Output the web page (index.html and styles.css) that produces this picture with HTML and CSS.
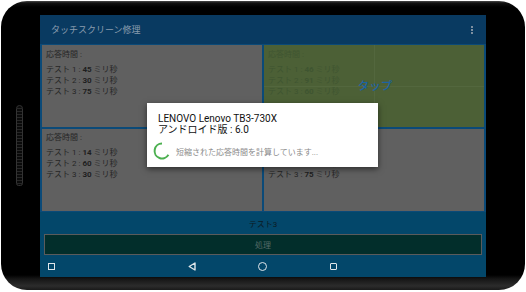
FILE: index.html
```html
<!DOCTYPE html>
<html lang="ja">
<head>
<meta charset="utf-8">
<title>タッチスクリーン修理</title>
<link rel="stylesheet" href="styles.css">
</head>
<body>
<div class="device">
  <div class="side-btn"></div>
  <div class="screen">
    <header class="appbar">
      <span class="title">タッチスクリーン修理</span>
      <span class="menu"><i></i><i></i><i></i></span>
    </header>
    <div class="grid">
      <div class="cell">
        <p class="head">応答時間 :</p>
        <p>テスト 1 : <b>45</b> ミリ秒</p>
        <p>テスト 2 : <b>30</b> ミリ秒</p>
        <p>テスト 3 : <b>75</b> ミリ秒</p>
      </div>
      <div class="cell green">
        <div class="lines">
          <p class="head">応答時間 :</p>
          <p>テスト 1 : <b>46</b> ミリ秒</p>
          <p>テスト 2 : <b>91</b> ミリ秒</p>
          <p>テスト 3 : <b>60</b> ミリ秒</p>
        </div>
        <span class="tap">タップ</span>
      </div>
      <div class="cell row2">
        <p class="head">応答時間 :</p>
        <p>テスト 1 : <b>14</b> ミリ秒</p>
        <p>テスト 2 : <b>60</b> ミリ秒</p>
        <p>テスト 3 : <b>30</b> ミリ秒</p>
      </div>
      <div class="cell row2">
        <p class="head">応答時間 :</p>
        <p>テスト 1 : <b>38</b> ミリ秒</p>
        <p>テスト 2 : <b>25</b> ミリ秒</p>
        <p>テスト 3 : <b>75</b> ミリ秒</p>
      </div>
    </div>
    <div class="label">テスト3</div>
    <div class="btn">処理</div>
    <nav class="navbar">
      <span class="nav-shot"></span>
      <svg class="nav-back" width="8" height="9" viewBox="0 0 8 9"><path d="M7 1 L1.2 4.5 L7 8 Z" fill="none" stroke="#dfe6ea" stroke-width="1.4" stroke-linejoin="round"/></svg>
      <span class="nav-home"></span>
      <span class="nav-recent"></span>
    </nav>
  </div>
  <div class="dialog">
    <p class="d-title">LENOVO Lenovo TB3-730X</p>
    <p class="d-title">アンドロイド版 : 6.0</p>
    <div class="d-row">
      <svg class="spinner" width="18" height="18" viewBox="0 0 18 18"><path d="M9 1.6 A7.4 7.4 0 1 0 15.4 12.7" fill="none" stroke="#4cb050" stroke-width="2"/></svg>
      <span class="d-msg">短縮された応答時間を計算しています...</span>
    </div>
  </div>
</div>
</body>
</html>
```
FILE: styles.css
```css
* { box-sizing: border-box; margin: 0; padding: 0; }
body {
  margin: 0;
  background: #fff;
  font-family: Roboto, "Noto Sans CJK JP", sans-serif;
}
.device {
  position: relative;
  width: 524px;
  height: 289px;
  margin: 1px 0 0 1px;
  border-radius: 26px;
  padding: 14px 39px 13px 39px;
  background: linear-gradient(to bottom, #4a4a4a 0, #111 2px, #000 6px, #000 274px, #161616 278px, #2c2c2c 285px, #1a1a1a 289px);
}
.side-btn {
  position: absolute;
  left: 15px;
  top: 104px;
  width: 7px;
  height: 81px;
  border-radius: 4px 4px 3px 3px;
  border: 1px solid #333;
  background: repeating-linear-gradient(to bottom, #0a0a0a 0, #0a0a0a 2px, #262626 2px, #262626 3px);
}
.screen {
  width: 446px;
  height: 262px;
  display: flex;
  flex-direction: column;
  background: #03476a;
}
.appbar {
  height: 29px;
  flex: none;
  background: #093a61;
  display: flex;
  align-items: center;
  justify-content: space-between;
  padding: 0 13px 0 11px;
}
.title { font-size: 9px; color: #8a9cae; }
.menu { display: flex; flex-direction: column; gap: 1px; }
.menu i { display: block; width: 2px; height: 2px; background: #7d8fa0; }
.grid {
  height: 168px;
  flex: none;
  background: #0b4a78;
  display: grid;
  grid-template-columns: 1fr 1fr;
  grid-template-rows: 1fr 1fr;
  gap: 2px;
  padding: 1px 2px;
}
.cell {
  background: #606060;
  padding: 4px;
  font-size: 8px;
  line-height: 11px;
  color: #262626;
}
.cell.row2 { padding-top: 3px; }
.cell .head { margin-bottom: 4px; }
.cell b { font-weight: bold; color: #1e1e1e; }
.green {
  position: relative;
  background: #4c6036;
  color: #3f5531;
  display: grid;
}
.green b { color: #3f5531; }
.green::before {
  content: "";
  position: absolute;
  left: 110px; top: 0; bottom: 0;
  width: 1px;
  background: #53673e;
}
.green::after {
  content: "";
  position: absolute;
  top: 41px; left: 0; right: 0;
  height: 1px;
  background: #53673e;
}
.green .lines, .green .tap { grid-area: 1 / 1; }
.tap {
  position: relative;
  z-index: 1;
  align-self: center;
  justify-self: center;
  font-size: 11.5px;
  line-height: 13px;
  font-weight: 500;
  color: #1c63a4;
  margin-left: 2px;
}
.label {
  height: 22px;
  flex: none;
  display: flex;
  align-items: center;
  justify-content: center;
  font-size: 8px;
  color: #0b1a24;
}
.btn {
  height: 21px;
  flex: none;
  margin: 0 4px;
  border: 1px solid #5b5b5b;
  background: #022e2b;
  color: #546a67;
  font-size: 8px;
  display: flex;
  align-items: center;
  justify-content: center;
}
.navbar {
  height: 22px;
  flex: none;
  display: flex;
  align-items: center;
}
.nav-shot {
  width: 7px; height: 7px;
  margin-left: 8px;
  border: 1.5px solid #dfe6ea;
}
.nav-back { margin-left: 133px; display: block; }
.nav-home {
  width: 9px; height: 9px;
  margin-left: 62px;
  border: 1.5px solid #dfe6ea;
  border-radius: 50%;
}
.nav-recent {
  width: 7px; height: 7px;
  margin-left: 63px;
  border: 1.5px solid #dfe6ea;
  border-radius: 1px;
}
.dialog {
  position: absolute;
  left: 146px;
  top: 102px;
  width: 231px;
  height: 64px;
  background: #fff;
  box-shadow: 0 2px 6px rgba(0,0,0,0.55);
  padding: 10px 11px 0 11px;
}
.d-title { font-size: 10px; line-height: 11px; color: #111; }
.d-row {
  display: flex;
  align-items: center;
  margin-top: 7px;
  height: 18px;
  margin-left: -5px;
}
.spinner { display: block; flex: none; }
.d-msg { margin-left: 5px; font-size: 8px; color: #8a8a8a; }
```
